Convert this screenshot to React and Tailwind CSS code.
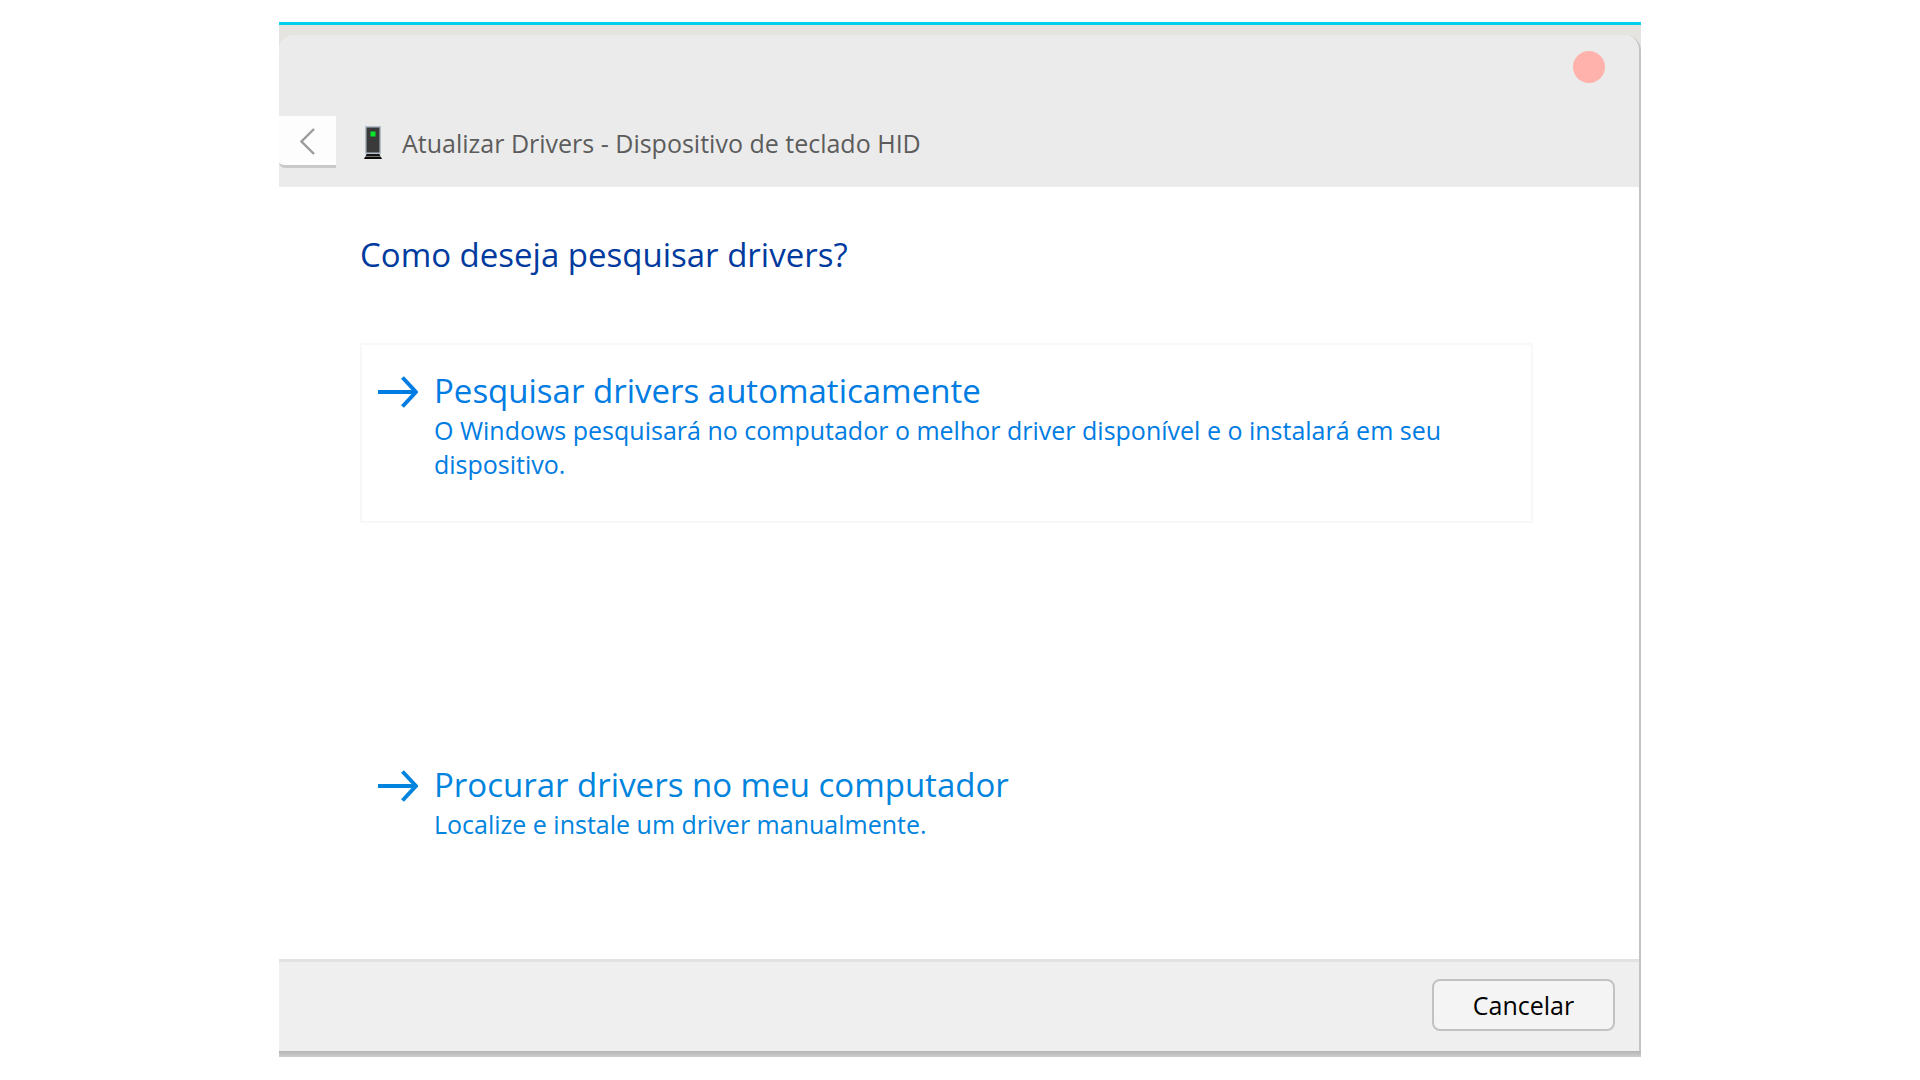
const options = [
  {
    title: "Pesquisar drivers automaticamente",
    description:
      "O Windows pesquisará no computador o melhor driver disponível e o instalará em seu dispositivo.",
    className: "border-[#f8f8f8] text-[#007ce2]",
  },
  {
    title: "Procurar drivers no meu computador",
    description: "Localize e instale um driver manualmente.",
    className: "border-transparent text-[#0084de]",
  },
];

function ArrowIcon() {
  return (
    <svg
      className="w-10 h-9 shrink-0 mt-[3px]"
      viewBox="0 0 40 36"
      fill="none"
      stroke="currentColor"
      strokeWidth="4"
      strokeLinejoin="round"
      aria-hidden="true"
    >
      <path d="M0 18H38" />
      <path d="M24.5 3.5L38 18L24.5 32.5" />
    </svg>
  );
}

function DeviceIcon() {
  return (
    <svg className="w-5 h-9 shrink-0" viewBox="0 0 20 36" aria-hidden="true">
      <rect x="2" y="1" width="16" height="28" fill="#b4bfca" />
      <rect x="3.5" y="2.5" width="13" height="25" fill="#3a3a3a" />
      <rect x="7.5" y="6.5" width="5" height="5" fill="#08e62a" />
      <path d="M3.5 29H16.5L17.5 31.5H2.5Z" fill="#151515" />
      <path d="M2.5 31.5H17.5" stroke="#6f6f6f" strokeWidth="0.8" />
      <path d="M2 32H18L19 34H1Z" fill="#0b0b0b" />
    </svg>
  );
}

function Option({ title, description, className }) {
  return (
    <button
      type="button"
      className={`flex items-start gap-4 w-full min-h-[180px] border-2 px-4 pt-[26px] text-left ${className}`}
    >
      <ArrowIcon />
      <span className="flex-1">
        <span className="block pb-0.5 text-[33px] leading-10">{title}</span>
        <span className="block text-[25px] leading-[34px]">{description}</span>
      </span>
    </button>
  );
}

export default function App() {
  return (
    <main className="min-h-screen bg-white pt-[22px] pb-6 font-['Open_Sans',sans-serif]">
      <div className="w-full max-w-[1362px] mx-auto">
        <div className="border-t-[3px] border-[#00d0ea] bg-[#e5e4e0] pt-2.5">
          <div className="rounded-t-[16px] border-r-2 border-[#c3c3c3] bg-white overflow-hidden">
            <header className="bg-[#ebebeb] pb-[19px]">
              <div className="flex justify-end pt-4 pr-[34px]">
                <button
                  type="button"
                  aria-label="Fechar"
                  className="size-8 rounded-full bg-[#ffb1ab]"
                />
              </div>
              <div className="flex items-center pt-[33px]">
                <button
                  type="button"
                  aria-label="Voltar"
                  className="flex items-center justify-center w-[57px] h-[52px] rounded-bl-md border-b-[3px] border-[#c9c9c9] bg-[#fdfdfd]"
                >
                  <svg
                    className="w-4 h-7"
                    viewBox="0 0 16 28"
                    fill="none"
                    stroke="#9b9b9b"
                    strokeWidth="2.4"
                    aria-hidden="true"
                  >
                    <path d="M14 2L1.5 14.5L14 27" />
                  </svg>
                </button>
                <div className="flex items-center gap-[19px] pl-[27px] pt-0.5">
                  <DeviceIcon />
                  <h1 className="text-[25px] leading-9 text-[#5c5c5c]">
                    Atualizar Drivers - Dispositivo de teclado HID
                  </h1>
                </div>
              </div>
            </header>

            <section className="pl-[81px] pr-[106px] pt-12 pb-[42px]">
              <h2 className="text-[33px] leading-10 text-[#003a9e]">
                Como deseja pesquisar drivers?
              </h2>
              <div className="flex flex-col gap-[214px] pt-[68px]">
                {options.map((option) => (
                  <Option key={option.title} {...option} />
                ))}
              </div>
            </section>

            <footer className="flex justify-end border-t-[3px] border-[#e2e2e2] bg-[#efefef] pt-[17px] pb-5 pr-6">
              <button
                type="button"
                className="w-[183px] h-[52px] rounded-lg border-2 border-[#c2c2c2] bg-[#f4f4f4] text-[25px] leading-9 text-black"
              >
                Cancelar
              </button>
            </footer>
          </div>
        </div>
        <div className="h-1.5 bg-linear-to-b from-[#b4b4b4] to-[#cecece]" />
      </div>
    </main>
  );
}
